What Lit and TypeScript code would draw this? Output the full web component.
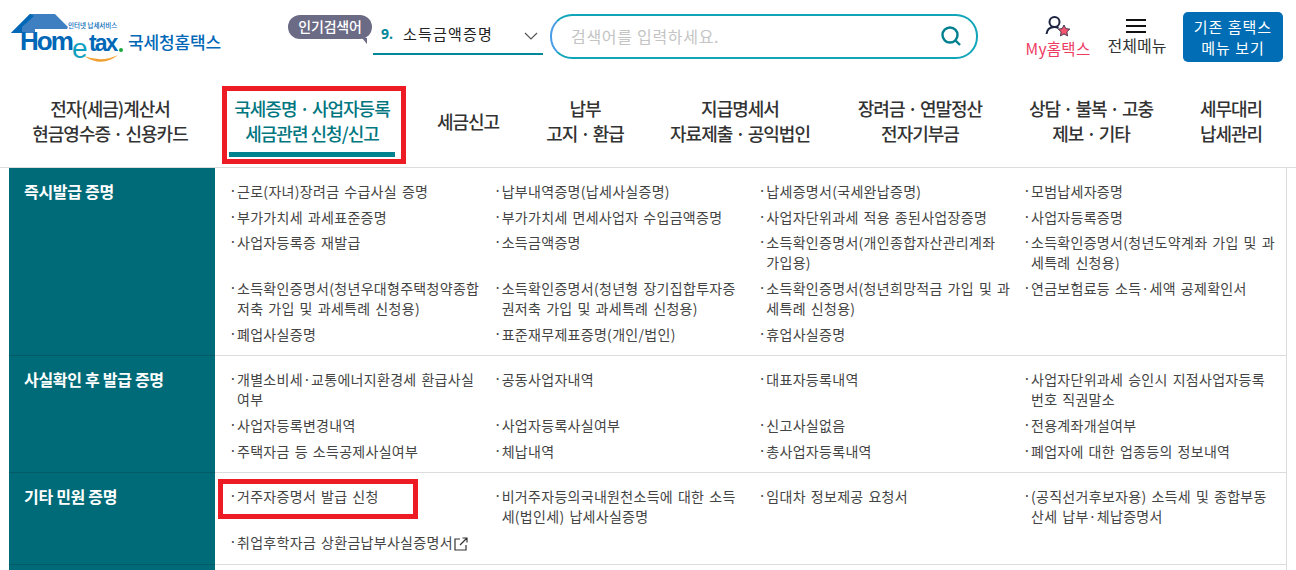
import { LitElement, html, css } from "lit";
import { customElement } from "lit/decorators.js";

type Item = { t: string; ext?: boolean };
const sections: { title: string; items: Item[] }[] = [
  {
    title: "즉시발급 증명",
    items: [
      "근로(자녀)장려금 수급사실 증명", "납부내역증명(납세사실증명)", "납세증명서(국세완납증명)", "모범납세자증명",
      "부가가치세 과세표준증명", "부가가치세 면세사업자 수입금액증명", "사업자단위과세 적용 종된사업장증명", "사업자등록증명",
      "사업자등록증 재발급", "소득금액증명", "소득확인증명서(개인종합자산관리계좌 가입용)", "소득확인증명서(청년도약계좌 가입 및 과세특례 신청용)",
      "소득확인증명서(청년우대형주택청약종합저축 가입 및 과세특례 신청용)", "소득확인증명서(청년형 장기집합투자증권저축 가입 및 과세특례 신청용)", "소득확인증명서(청년희망적금 가입 및 과세특례 신청용)", "연금보험료등 소득·세액 공제확인서",
      "폐업사실증명", "표준재무제표증명(개인/법인)", "휴업사실증명",
    ].map((t) => ({ t })),
  },
  {
    title: "사실확인 후 발급 증명",
    items: [
      "개별소비세·교통에너지환경세 환급사실 여부", "공동사업자내역", "대표자등록내역", "사업자단위과세 승인시 지점사업자등록번호 직권말소",
      "사업자등록변경내역", "사업자등록사실여부", "신고사실없음", "전용계좌개설여부",
      "주택자금 등 소득공제사실여부", "체납내역", "총사업자등록내역", "폐업자에 대한 업종등의 정보내역",
    ].map((t) => ({ t })),
  },
  {
    title: "기타 민원 증명",
    items: [
      { t: "거주자증명서 발급 신청" },
      { t: "비거주자등의국내원천소득에 대한 소득세(법인세) 납세사실증명" },
      { t: "임대차 정보제공 요청서" },
      { t: "(공직선거후보자용) 소득세 및 종합부동산세 납부·체납증명서" },
      { t: "취업후학자금 상환금납부사실증명서", ext: true },
    ],
  },
  { title: "", items: [] },
];

const nav: { lines: string[]; active?: boolean }[] = [
  { lines: ["전자(세금)계산서", "현금영수증 · 신용카드"] },
  { lines: ["국세증명 · 사업자등록", "세금관련 신청/신고"], active: true },
  { lines: ["세금신고"] },
  { lines: ["납부", "고지 · 환급"] },
  { lines: ["지급명세서", "자료제출 · 공익법인"] },
  { lines: ["장려금 · 연말정산", "전자기부금"] },
  { lines: ["상담 · 불복 · 고충", "제보 · 기타"] },
  { lines: ["세무대리", "납세관리"] },
];

@customElement("app-root")
export class AppRoot extends LitElement {
  static styles = css`
    :host {
      display: block;
      width: 1296px;
      height: 570px;
      overflow: hidden;
      position: relative;
      background: #fff;
      font-family: "Noto Sans CJK KR", "Noto Sans", sans-serif;
      color: #333;
    }
    .top {
      height: 86px;
      display: grid;
      grid-template-columns: 288px 85px 170px 428px 1fr;
      align-items: start;
      box-sizing: border-box;
    }
    .logo { display: block; margin-left: 10px; margin-top: 13px; }
    .logo-sub { font-size: 6.5px; fill: #0068b7; font-weight: 500; }
    .logo-home { font-family: "Liberation Sans", sans-serif; font-size: 26px; font-weight: 700; fill: #0068b7; letter-spacing: -2px; }
    .logo-tax { font-family: "Liberation Sans", sans-serif; font-size: 23px; font-weight: 700; fill: #0068b7; letter-spacing: -2px; }
    .logo-e { font-family: "Liberation Sans", sans-serif; font-size: 28px; font-weight: 400; fill: #0ea0c0; }
    .logo-name { font-size: 17px; font-weight: 500; fill: #0068b7; letter-spacing: -.15px; }
    .bubble {
      position: relative;
      margin-top: 15px;
      width: 84px;
      height: 24px;
      border-radius: 12px;
      background: #6b6b86;
      color: #fff;
      font-size: 14px;
      font-weight: 500;
      line-height: 23px;
      text-align: center;
      letter-spacing: -.2px;
    }
    .bubble::after {
      content: "";
      position: absolute;
      right: 5px;
      bottom: -5px;
      border-top: 6px solid #6b6b86;
      border-left: 5px solid transparent;
    }
    .select {
      margin-top: 14px;
      height: 41px;
      box-sizing: border-box;
      border-bottom: 2px solid #00889a;
      display: flex;
      align-items: center;
      font-size: 15px;
      letter-spacing: 1.2px;
      color: #222;
      padding-left: 8px;
    }
    .select b { color: #00889a; margin-right: 10px; font-family: "Noto Sans", sans-serif; letter-spacing: 0; font-size: 14px; }
    .select svg { margin: 4px 5px 0 auto; }
    .search {
      margin: 14px 0 0 7px;
      width: 428px;
      height: 45px;
      box-sizing: border-box;
      border: 2px solid;
      border-color: #10a5b8;
      border-left-color: #4a9be8;
      border-radius: 22px;
      display: flex;
      align-items: center;
      padding: 0 14px 2px 19px;
      color: #c4c4c4;
      font-size: 16px;
      letter-spacing: .7px;
    }
    .search svg { margin-left: auto; }
    .util { display: flex; margin-left: 54px; align-items: flex-start; }
    .my, .all { display: flex; flex-direction: column; align-items: center; font-size: 16px; letter-spacing: 0; }
    .my { width: 66px; color: #ee3b62; margin-top: 15px; font-size: 15.5px; letter-spacing: .3px; }
    .my svg { margin-bottom: 0; }
    .all { width: 60px; margin-left: 16px; color: #333; margin-top: 15px; }
    .all svg { margin: 4px 2px 0 0; }
    .old {
      margin: 12px 0 0 16px;
      width: 100px;
      height: 50px;
      border-radius: 5px;
      background: #006db5;
      color: #fff;
      font-size: 15px;
      line-height: 21px;
      text-align: center;
      padding-top: 4px;
      box-sizing: border-box;
      letter-spacing: 1px;
    }
    .nav {
      height: 82px;
      display: grid;
      grid-template-columns: 20px 180px 22px 180px 12px 108px 8px 110px 10px 180px 180px 162px 118px;
      box-sizing: border-box;
      border-bottom: 1px solid #dcdcdc;
      font-size: 18px;
      letter-spacing: -1px;
      line-height: 25px;
      color: #333;
      font-weight: 500;
      text-align: center;
    }
    .nav .n { display: flex; flex-direction: column; justify-content: center; height: 77px; padding-bottom: 7px; box-sizing: border-box; }
    .nav .n.on { color: #00767f; position: relative; }
    .nav .n.on::after {
      content: "";
      position: absolute;
      left: 7px;
      right: 7px;
      bottom: 6px;
      height: 5px;
      background: #00838f;
    }
    .table { margin: 0 9px; border-right: 1px solid #dcdcdc; }
    .row {
      display: grid;
      grid-template-columns: 206px 1fr;
      border-bottom: 1px solid #dcdcdc;
    }
    .head {
      background: #006b78;
      color: #fff;
      font-size: 16px;
      font-weight: 700;
      padding: 10px 15px;
      min-height: 27px;
      line-height: 27px;
      letter-spacing: -.3px;
      margin-bottom: -1px;
      border-bottom: 1px solid #045a65;
    }
    .items {
      display: grid;
      grid-template-columns: repeat(4, 264.67px);
      padding: 13px 0 6px 15px;
      font-size: 14px;
      line-height: 20px;
      color: #444;
      letter-spacing: .3px;
      word-spacing: 1.5px;
      align-content: start;
    }
    .it { padding: 0 13.6px 5.67px 7px; position: relative; word-break: break-all; }
    .it::before { content: "·"; position: absolute; left: -1px; top: -1px; }
    .it svg { vertical-align: -3px; margin-left: 1px; }
    .mark {
      position: absolute;
      box-sizing: border-box;
      border: 5px solid #ed1c24;
      pointer-events: none;
    }
    .m1 { left: 222px; top: 86px; width: 184px; height: 78px; }
    .m2 { left: 218px; top: 479px; width: 200px; height: 40px; }
  `;

  render() {
    return html`
      <div class="top">
        <svg class="logo" width="278" height="50" viewBox="0 0 278 50">
          <path d="M1 20 L20 1 H45 L58 14 L57 16 H25 V20 H12 V20Z" fill="#3d7fc0" />
          <path d="M1 20 L20 1 L24 3 L12 14 V20Z" fill="#0068b7" />
          <text class="logo-sub" x="58" y="15">인터넷 납세서비스</text>
          <text class="logo-home" x="10" y="37">Hom</text>
          <text class="logo-e" x="62" y="45">e</text>
          <text class="logo-tax" x="79" y="38">tax</text>
          <circle cx="111" cy="37" r="2" fill="#1aa83c" />
          <path d="M74 43 Q92 55 108 42 Q92 50 74 43Z" fill="#f0a030" />
          <text class="logo-name" x="118" y="36">국세청홈택스</text>
        </svg>
        <div class="bubble">인기검색어</div>
        <div class="select">
          <b>9.</b>소득금액증명
          <svg width="14" height="8" viewBox="0 0 14 8" fill="none" stroke="#555" stroke-width="1.2"><path d="M1 1l6 6 6-6" /></svg>
        </div>
        <div class="search">
          검색어를 입력하세요.
          <svg width="22" height="22" viewBox="0 0 22 22" fill="none" stroke="#00808f" stroke-width="2.4"><circle cx="10" cy="10" r="7.5" /><path d="M15.5 15.5l4.5 4.5" /></svg>
        </div>
        <div class="util">
          <div class="my">
            <svg width="26" height="22" viewBox="0 0 26 22">
              <circle cx="9.5" cy="7" r="5" fill="none" stroke="#1c2340" stroke-width="2" />
              <path d="M1.5 19c.5-5 4-7 8-7 2 0 3 .5 4 1" fill="none" stroke="#1c2340" stroke-width="2" />
              <path d="M19 10l1.8 3.6 4 .5-2.9 2.8.7 4-3.6-1.9-3.6 1.9.7-4-2.9-2.8 4-.5z" fill="#f2546e" stroke="#1c2340" stroke-width=".8" />
            </svg>
            My홈택스
          </div>
          <div class="all">
            <svg width="20" height="14" viewBox="0 0 20 14" fill="#111"><rect width="20" height="2" /><rect y="6" width="20" height="2" /><rect y="12" width="20" height="2" /></svg>
            전체메뉴
          </div>
          <div class="old">기존 홈택스<br />메뉴 보기</div>
        </div>
      </div>
      <div class="nav">
        ${nav.flatMap((n, i) => {
          const cell = html`<div class="n ${n.active ? "on" : ""}">${n.lines.map((l) => html`<span>${l}</span>`)}</div>`;
          const gap = html`<span></span>`;
          return i < 5 ? [gap, cell] : [cell];
        })}
      </div>
      <div class="table">
        ${sections.map(
          (s) => html`
            <div class="row">
              <div class="head">${s.title}</div>
              <div class="items">
                ${s.items.map(
                  (i) => html`<div class="it">${i.t}${i.ext
                    ? html`<svg width="14" height="14" viewBox="0 0 14 14" fill="none" stroke="#333" stroke-width="1.2"><path d="M6 2H1v11h11V8M6 8l7-7M8.5 1H13v4.5" /></svg>`
                    : ""}</div>`
                )}
              </div>
            </div>
          `
        )}
      </div>
      <div class="mark m1"></div>
      <div class="mark m2"></div>
    `;
  }
}
